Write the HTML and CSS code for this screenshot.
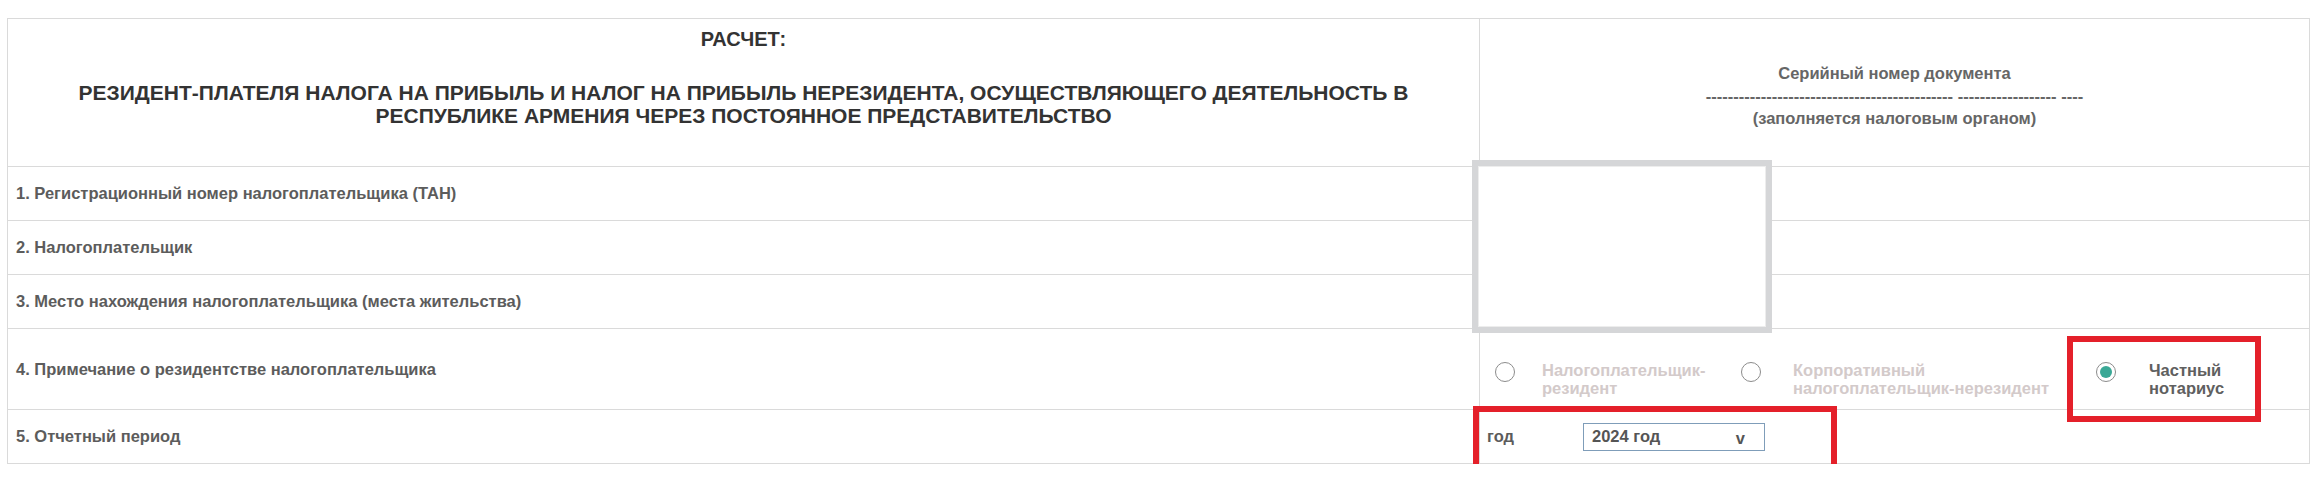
FILE: index.html
```html
<!DOCTYPE html>
<html lang="ru">
<head>
<meta charset="utf-8">
<title>Расчет</title>
<link rel="stylesheet" href="styles.css">
</head>
<body>
<div class="page">
  <div class="form">
    <div class="cell head-main">
      <div class="title-top">РАСЧЕТ:</div>
      <div class="title">РЕЗИДЕНТ-ПЛАТЕЛЯ НАЛОГА НА ПРИБЫЛЬ И НАЛОГ НА ПРИБЫЛЬ НЕРЕЗИДЕНТА, ОСУЩЕСТВЛЯЮЩЕГО ДЕЯТЕЛЬНОСТЬ В РЕСПУБЛИКЕ АРМЕНИЯ ЧЕРЕЗ ПОСТОЯННОЕ ПРЕДСТАВИТЕЛЬСТВО</div>
    </div>
    <div class="cell head-serial">
      <div>Серийный номер документа</div>
      <div>--------------------------------------------- ------------------ ----</div>
      <div>(заполняется налоговым органом)</div>
    </div>

    <div class="cell label">1. Регистрационный номер налогоплательщика (ТАН)</div>
    <div class="cell side"><div class="photo"></div></div>

    <div class="cell label">2. Налогоплательщик</div>
    <div class="cell side"></div>

    <div class="cell label">3. Место нахождения налогоплательщика (места жительства)</div>
    <div class="cell side"></div>

    <div class="cell label">4. Примечание о резидентстве налогоплательщика</div>
    <div class="cell side options">
      <div class="radio opt1"></div>
      <div class="opt-label disabled lbl1">Налогоплательщик-резидент</div>
      <div class="radio opt2"></div>
      <div class="opt-label disabled lbl2">Корпоративный налогоплательщик-нерезидент</div>
      <div class="radio checked opt3"></div>
      <div class="opt-label lbl3">Частный нотариус</div>
      <div class="mark mark-notary"></div>
    </div>

    <div class="cell label">5. Отчетный период</div>
    <div class="cell side year">
      <div class="year-label">год</div>
      <div class="select"><span>2024 год</span><span class="arrow">v</span></div>
      <div class="mark mark-year"></div>
    </div>
  </div>
</div>
</body>
</html>
```
FILE: styles.css
```css
html, body {
  margin: 0;
  padding: 0;
  background: #ffffff;
}

body {
  font-family: "Liberation Sans", Arial, sans-serif;
  font-weight: bold;
  font-size: 16.5px;
  color: #5c5c5c;
}

.page {
  padding: 18px 0 0 7px;
}

.form {
  display: grid;
  grid-template-columns: 1472px 830px;
  grid-template-rows: 148px 54px 54px 54px 81px 54px;
  width: max-content;
  border-top: 1px solid #dadada;
  border-left: 1px solid #dadada;
}

.cell {
  box-sizing: border-box;
  border-right: 1px solid #dadada;
  border-bottom: 1px solid #dadada;
  position: relative;
}

.head-main {
  padding: 9px 20px 0;
  text-align: center;
  color: #333333;
  line-height: 23px;
}

.title-top {
  font-size: 20px;
  margin-bottom: 30px;
}

.title {
  font-size: 21px;
}

.head-serial {
  padding-top: 43px;
  text-align: center;
  color: #666666;
  line-height: 22.5px;
}

.label {
  display: flex;
  align-items: center;
  padding-left: 8px;
}

.photo {
  position: absolute;
  left: -8px;
  top: -7px;
  width: 300px;
  height: 173px;
  box-sizing: border-box;
  border: 6px solid #d5d6d8;
  box-shadow: inset 0 0 0 1px #ededed;
  background: #ffffff;
  z-index: 2;
}

.options {
  display: flex;
  align-items: flex-start;
  padding-top: 32px;
  line-height: 18px;
}

.radio {
  flex: none;
  width: 20px;
  height: 20px;
  box-sizing: border-box;
  border: 1px solid #8c8c8c;
  border-radius: 50%;
  margin-top: 1px;
  position: relative;
  background: #ffffff;
}

.radio.checked::after {
  content: "";
  position: absolute;
  left: 3px;
  top: 3px;
  width: 12px;
  height: 12px;
  border-radius: 50%;
  background: #3aa896;
}

.opt1 { margin-left: 15px; }
.opt2 { margin-left: 19px; }
.opt3 { margin-left: 33px; }

.opt-label {
  flex: none;
}

.disabled {
  color: #d3caca;
}

.lbl1 { margin-left: 27px; width: 180px; }
.lbl2 { margin-left: 32px; width: 270px; }
.lbl3 { margin-left: 33px; width: 100px; color: #606060; }

.year {
  display: flex;
  align-items: center;
  padding-left: 7px;
}

.year-label {
  width: 96px;
}

.select {
  width: 182px;
  height: 28px;
  box-sizing: border-box;
  border: 1px solid #7f9db9;
  display: flex;
  align-items: center;
  justify-content: space-between;
  padding: 0 19px 0 8px;
  color: #555555;
}

.arrow {
  padding-top: 3px;
}

.mark {
  position: absolute;
  box-sizing: border-box;
  border: 6px solid #e4202a;
  z-index: 3;
}

.mark-notary {
  left: 587px;
  top: 7px;
  width: 194px;
  height: 86px;
}

.mark-year {
  left: -7px;
  top: -4px;
  width: 364px;
  height: 66px;
}
```
